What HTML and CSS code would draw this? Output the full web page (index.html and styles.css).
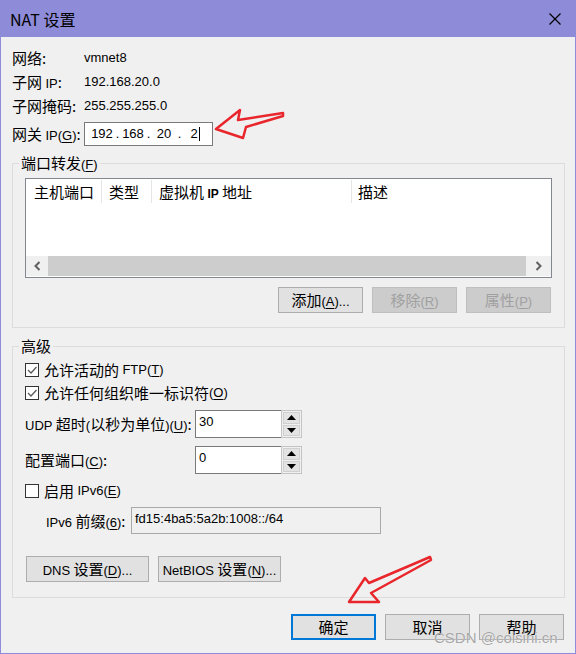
FILE: index.html
```html
<!DOCTYPE html>
<html lang="zh-CN">
<head>
<meta charset="utf-8">
<title>NAT 设置</title>
<link rel="stylesheet" href="styles.css">
</head>
<body>
<div class="window">
  <div class="titlebar">
    <span class="title">NAT 设置</span>
    <svg class="close" width="12" height="12" viewBox="0 0 12 12"><path d="M0.5 0.5 L11.5 11.5 M11.5 0.5 L0.5 11.5" stroke="#000" stroke-width="1.2" fill="none"/></svg>
  </div>
  <div class="content">
    <div class="info">
      <div class="row"><span class="lbl">网络:</span><span class="val">vmnet8</span></div>
      <div class="row"><span class="lbl">子网 <span class="l">IP</span>:</span><span class="val">192.168.20.0</span></div>
      <div class="row"><span class="lbl">子网掩码:</span><span class="val">255.255.255.0</span></div>
      <div class="row gw">
        <span class="lbl">网关 <span class="l">IP(<u>G</u>)</span>:</span>
        <div class="ipbox">
          <span class="oct">192</span><span class="dot">.</span><span class="oct">168</span><span class="dot">.</span><span class="oct">20</span><span class="dot">.</span><span class="oct">2<span class="caret"></span></span>
        </div>
      </div>
    </div>

    <fieldset class="group pf">
      <legend>端口转发<span class="l">(<u>F</u>)</span></legend>
      <div class="group-inner">
        <div class="listview">
          <div class="lv-head">
            <div class="col c1">主机端口</div>
            <div class="col c2">类型</div>
            <div class="col c3">虚拟机 <span class="l b">IP</span> 地址</div>
            <div class="col c4">描述</div>
          </div>
          <div class="lv-body"></div>
          <div class="hscroll">
            <div class="sb-arrow sb-left"><svg width="7" height="10" viewBox="0 0 7 10"><path d="M5.5 1 L1.5 5 L5.5 9" stroke="#606060" stroke-width="2" fill="none"/></svg></div>
            <div class="sb-thumb"></div>
            <div class="sb-arrow sb-right"><svg width="7" height="10" viewBox="0 0 7 10"><path d="M1.5 1 L5.5 5 L1.5 9" stroke="#606060" stroke-width="2" fill="none"/></svg></div>
          </div>
        </div>
        <div class="btnrow">
          <button class="btn">添加<span class="l">(<u>A</u>)...</span></button>
          <button class="btn disabled">移除<span class="l">(<u>R</u>)</span></button>
          <button class="btn disabled">属性<span class="l">(<u>P</u>)</span></button>
        </div>
      </div>
    </fieldset>

    <fieldset class="group adv">
      <legend>高级</legend>
      <div class="group-inner">
        <div class="check"><span class="box"><svg width="12" height="12" viewBox="0 0 12 12"><path d="M2 6 L5 9 L10.5 3" stroke="#5a5a5a" stroke-width="1.3" fill="none"/></svg></span>允许活动的 <span class="l">FTP(<u>T</u>)</span></div>
        <div class="check"><span class="box"><svg width="12" height="12" viewBox="0 0 12 12"><path d="M2 6 L5 9 L10.5 3" stroke="#5a5a5a" stroke-width="1.3" fill="none"/></svg></span>允许任何组织唯一标识符<span class="l">(<u>O</u>)</span></div>

        <div class="field-row udp">
          <span class="flbl"><span class="l">UDP</span> 超时<span class="l">(</span>以秒为单位<span class="l">)(<u>U</u>)</span>:</span>
          <div class="spin">
            <div class="spin-text">30</div>
            <div class="spin-btns">
              <span class="sbtn"><svg width="9" height="5" viewBox="0 0 9 5"><path d="M0 5 L4.5 0 L9 5 Z" fill="#000"/></svg></span>
              <span class="sbtn"><svg width="9" height="5" viewBox="0 0 9 5"><path d="M0 0 L4.5 5 L9 0 Z" fill="#000"/></svg></span>
            </div>
          </div>
        </div>

        <div class="field-row cfg">
          <span class="flbl">配置端口<span class="l">(<u>C</u>)</span>:</span>
          <div class="spin">
            <div class="spin-text">0</div>
            <div class="spin-btns">
              <span class="sbtn"><svg width="9" height="5" viewBox="0 0 9 5"><path d="M0 5 L4.5 0 L9 5 Z" fill="#000"/></svg></span>
              <span class="sbtn"><svg width="9" height="5" viewBox="0 0 9 5"><path d="M0 0 L4.5 5 L9 0 Z" fill="#000"/></svg></span>
            </div>
          </div>
        </div>

        <div class="check ipv6"><span class="box"></span>启用 <span class="l">IPv6(<u>E</u>)</span></div>

        <div class="field-row v6">
          <span class="flbl v6lbl"><span class="l">IPv6</span> 前缀<span class="l">(<u>6</u>)</span>:</span>
          <div class="v6box">fd15:4ba5:5a2b:1008::/64</div>
        </div>

        <div class="btnrow2">
          <button class="btn wide"><span class="l">DNS</span> 设置<span class="l">(<u>D</u>)...</span></button>
          <button class="btn wide"><span class="l">NetBIOS</span> 设置<span class="l">(<u>N</u>)...</span></button>
        </div>
      </div>
    </fieldset>

    <div class="dlg-btns">
      <button class="btn default">确定</button>
      <button class="btn">取消</button>
      <button class="btn">帮助</button>
    </div>
  </div>

  <svg class="annot" width="576" height="654" viewBox="0 0 576 654">
    <polygon points="216,129 240,110 238,120 283,113 283,116 246,127 243,138" fill="none" stroke="#e8262b" stroke-width="2.5" stroke-linejoin="round"/>
    <polygon points="430,557 369,583 365,578 349,602 379,602 371,593 431,560" fill="none" stroke="#e8262b" stroke-width="2.5" stroke-linejoin="round"/>
  </svg>
  <div class="watermark">CSDN @coisini.cn</div>
</div>
</body>
</html>
```

FILE: styles.css
```css
* { box-sizing: border-box; }
html, body { margin: 0; padding: 0; }
body {
  width: 576px;
  height: 654px;
  overflow: hidden;
  background: #f0f0f0;
  font-family: "Noto Sans CJK SC", "Liberation Sans", sans-serif;
  font-size: 15px;
  color: #000;
}
u { text-decoration: underline; text-underline-offset: 2px; }
.l { font-family: "Liberation Sans", sans-serif; font-size: 13px; line-height: 0; }
.l.b { font-weight: bold; font-size: 12px; }

.window {
  position: relative;
  width: 576px;
  height: 654px;
  border: 1px solid #8e8bd8;
  border-top: none;
  background: #f0f0f0;
}

.titlebar {
  height: 37px;
  background: #8e8bd8;
  display: flex;
  align-items: center;
  justify-content: space-between;
  padding: 0 14px 0 9px;
}
.title { font-size: 16px; line-height: 20px; }
.close { display: block; }

.content { padding: 9px 10px 0 11px; }

.info .row { display: flex; align-items: center; height: 24px; }
.lbl { width: 72px; line-height: 24px; flex: none; white-space: nowrap; }
.val { font-family: "Liberation Sans", sans-serif; font-size: 13px; line-height: 24px; }
.info .row.gw { margin-top: 4px; }

.ipbox {
  width: 129px;
  height: 24px;
  border: 1px solid #7a7a7a;
  background: #fff;
  display: flex;
  align-items: center;
  padding-left: 5px;
  font-family: "Liberation Sans", sans-serif;
  font-size: 13px;
}
.oct { width: 24px; text-align: center; line-height: 16px; }
.dot { width: 7px; text-align: center; line-height: 16px; }
.caret {
  display: inline-block;
  width: 1px;
  height: 14px;
  background: #000;
  vertical-align: -3px;
  margin-left: 1px;
}

.group {
  margin: 9px 0 0 0;
  padding: 0;
  border: 1px solid #dcdcdc;
  min-width: 0;
}
.group legend {
  margin-left: 6px;
  padding: 0 2px;
  line-height: 16px;
  height: 16px;
  font-size: 15px;
}
.group.adv { margin-top: 10px; }
.group-inner { padding: 7px 12px 14px 12px; }
.adv .group-inner { padding: 4px 12px 15px 12px; }

.listview {
  height: 100px;
  border: 1px solid #828790;
  background: #fff;
  display: flex;
  flex-direction: column;
}
.lv-head { height: 25px; display: flex; flex: none; }
.col {
  margin-top: 1px;
  height: 23px;
  line-height: 23px;
  padding-left: 7px;
  border-right: 1px solid #e5e5e5;
  white-space: nowrap;
}
.c1 { width: 76px; padding-left: 8px; }
.c2 { width: 50px; }
.c3 { width: 200px; }
.c4 { flex: 1; border-right: none; padding-left: 6px; }
.lv-body { flex: 1; }
.hscroll {
  height: 20px;
  margin-bottom: 1px;
  display: flex;
  flex: none;
  background: #f0f0f0;
}
.sb-arrow { display: flex; align-items: center; justify-content: center; }
.sb-left { width: 22px; }
.sb-right { width: 25px; }
.sb-thumb { flex: 1; background: #cdcdcd; }

.btn {
  width: 85px;
  height: 26px;
  padding: 0;
  border: 1px solid #adadad;
  background: #e1e1e1;
  font-family: "Noto Sans CJK SC", "Liberation Sans", sans-serif;
  font-size: 15px;
  line-height: 22px;
  color: #000;
  text-align: center;
  white-space: nowrap;
}
.btn.disabled { background: #cccccc; border-color: #bfbfbf; color: #a0a0a0; }
.btn.default { border: 2px solid #0078d7; }
.btn.wide { width: 123px; }

.btnrow {
  display: flex;
  justify-content: flex-end;
  gap: 9px;
  margin-top: 9px;
  padding-right: 1px;
}

.check { display: flex; align-items: center; height: 23px; line-height: 23px; white-space: pre; }
.box {
  width: 14px;
  height: 14px;
  border: 1px solid #333;
  background: #fff;
  margin-right: 5px;
  display: flex;
  align-items: center;
  justify-content: center;
  flex: none;
}
.check.ipv6 { margin-top: 5px; }

.field-row { display: flex; align-items: center; height: 28px; margin-top: 6px; }
.field-row.cfg { margin-top: 8px; }
.flbl { width: 170px; flex: none; line-height: 20px; white-space: nowrap; }

.spin { display: flex; width: 107px; height: 28px; }
.spin-text {
  flex: 1;
  border: 1px solid #7a7a7a;
  border-right: none;
  background: #fff;
  padding: 3px 0 0 3px;
  line-height: 16px;
  font-family: "Liberation Sans", sans-serif;
  font-size: 13px;
}
.spin-btns {
  width: 21px;
  display: flex;
  flex-direction: column;
  gap: 1px;
  padding: 1px;
  border: 1px solid #c4c4c4;
  background: #f0f0f0;
}
.sbtn {
  flex: 1;
  background: #e3e3e3;
  border: 1px solid #d0d0d0;
  display: flex;
  align-items: center;
  justify-content: center;
}

.field-row.v6 { margin-top: 5px; height: 27px; }
.v6lbl { width: 106px; padding-left: 21px; }
.v6box {
  width: 250px;
  height: 27px;
  border: 1px solid #a9a9a9;
  background: #f0f0f0;
  padding: 3px 0 0 3px;
  line-height: 16px;
  font-family: "Liberation Sans", sans-serif;
  font-size: 13px;
}

.btnrow2 { display: flex; gap: 9px; margin-top: 22px; padding-left: 1px; }

.dlg-btns {
  display: flex;
  justify-content: flex-end;
  gap: 9px;
  margin-top: 16px;
  padding-right: 1px;
}

.annot { position: absolute; left: -1px; top: 0; pointer-events: none; }
.watermark {
  position: absolute;
  left: 433px;
  top: 629px;
  font-family: "Liberation Sans", sans-serif;
  font-size: 15px;
  line-height: 18px;
  color: rgba(150, 150, 150, 0.85);
  text-shadow: 0 0 1px #fff;
  white-space: nowrap;
}
```
